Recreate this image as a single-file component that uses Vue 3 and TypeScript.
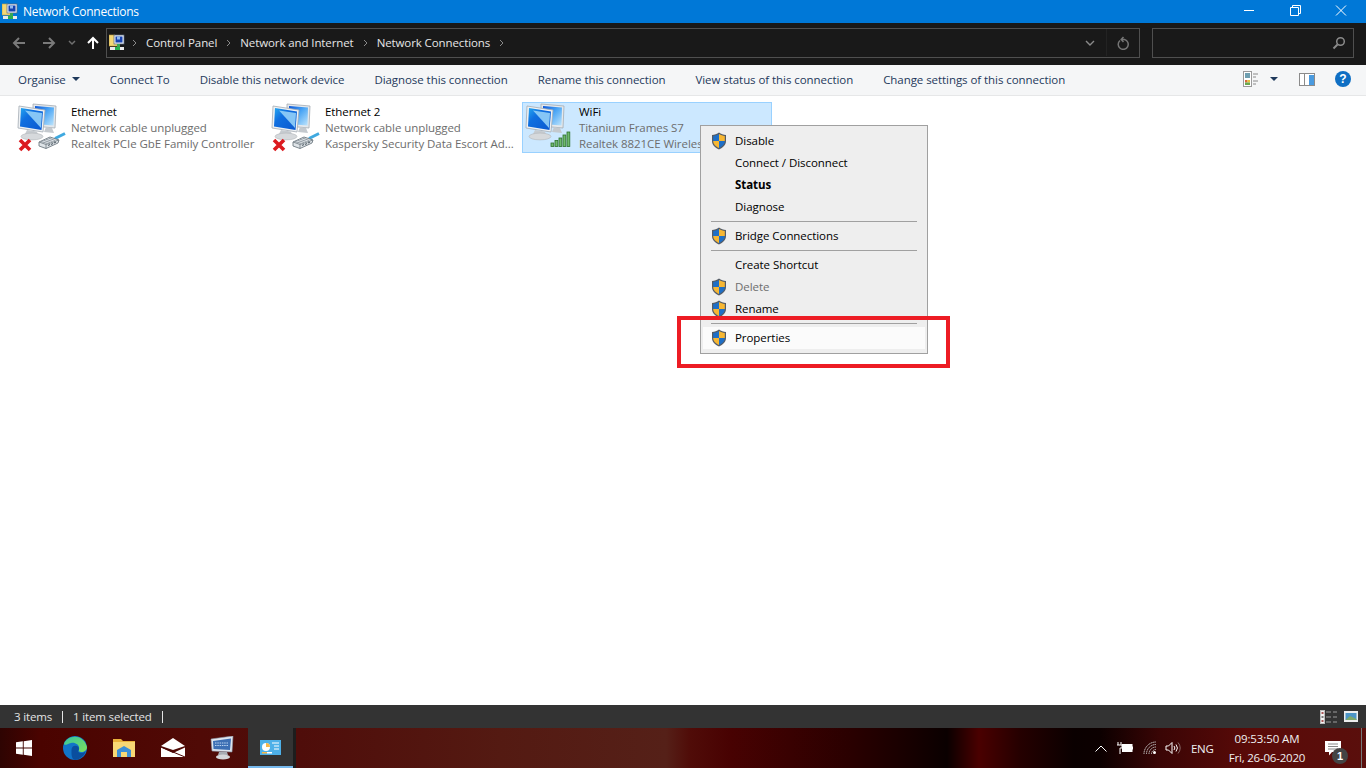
<script setup lang="ts">
const items = [
  { name: 'Ethernet', status: 'Network cable unplugged', device: 'Realtek PCIe GbE Family Controller', kind: 'wired', selected: false },
  { name: 'Ethernet 2', status: 'Network cable unplugged', device: 'Kaspersky Security Data Escort Ad...', kind: 'wired', selected: false },
  { name: 'WiFi', status: 'Titanium Frames S7', device: 'Realtek 8821CE Wireless', kind: 'wifi', selected: true },
]
const actions = [
  'Connect To',
  'Disable this network device',
  'Diagnose this connection',
  'Rename this connection',
  'View status of this connection',
  'Change settings of this connection',
]
const crumbs = ['Control Panel', 'Network and Internet', 'Network Connections']
type Entry = { label?: string; shield?: boolean; bold?: boolean; off?: boolean; hot?: boolean; sep?: boolean }
const menu: Entry[] = [
  { label: 'Disable', shield: true },
  { label: 'Connect / Disconnect' },
  { label: 'Status', bold: true },
  { label: 'Diagnose' },
  { sep: true },
  { label: 'Bridge Connections', shield: true },
  { sep: true },
  { label: 'Create Shortcut' },
  { label: 'Delete', shield: true, off: true },
  { label: 'Rename', shield: true },
  { sep: true },
  { label: 'Properties', shield: true, hot: true },
]
</script>

<template>
  <div class="window">
    <svg class="sprite" width="0" height="0" aria-hidden="true">
      <defs>
        <linearGradient id="screen" x1="0" y1="0" x2="1" y2="1">
          <stop offset="0" stop-color="#0a55d8" />
          <stop offset="0.45" stop-color="#4aa5f5" />
          <stop offset="1" stop-color="#bfe5fc" />
        </linearGradient>
        <linearGradient id="edge" x1="0" y1="0" x2="1" y2="1">
          <stop offset="0" stop-color="#25a8f0" />
          <stop offset="0.35" stop-color="#0f6fe0" />
          <stop offset="1" stop-color="#0b58cf" />
        </linearGradient>
        <symbol id="pc" viewBox="0 0 44 40">
          <path d="M16 1 39 3 38 25 16 23Z" fill="#e4e8ec" stroke="#a3abb2" stroke-width=".8" />
          <path d="M18 3 37 4.500 36.500 22.500 18 21Z" fill="url(#screen)" />
          <path d="M29 24 35 25 37 30 27 29Z" fill="#c4c9ce" />
          <path d="M2 3 28 7 26 29 1 25Z" fill="#eef1f4" stroke="#a3abb2" stroke-width=".8" />
          <path d="M4 5 26 8.500 24.500 27 3 23.500Z" fill="url(#edge)" />
          <path d="M8 7.500 25 10 24 25Z" fill="#93d0f8" opacity=".9" />
          <path d="M10 27 20 28.500 21 32 8 31Z" fill="#c6cbd0" />
          <ellipse cx="15" cy="33.500" rx="11" ry="3.400" fill="#d6d9dc" stroke="#abafb3" stroke-width=".5" />
        </symbol>
        <symbol id="cross" viewBox="0 0 14 14">
          <path d="M2 2 12 12M12 2 2 12" stroke="#dc1a1f" stroke-width="3.600" fill="none" />
        </symbol>
        <symbol id="plug" viewBox="0 0 28 18">
          <path d="M17 6.500 27 1.500" stroke="#3fa9e0" stroke-width="3" fill="none" />
          <path d="M1 10 12 5 21 8 20 11 8 16.500 1 14Z" fill="#dfe4e8" stroke="#6f7a82" stroke-width=".9" />
          <path d="M1 10 8 12.500 21 8M8 12.500V16.500" stroke="#6f7a82" stroke-width=".8" fill="none" />
          <path d="M3 9.500 9.500 11.500M5.500 8.300 12 10.500M8 7.200 14.500 9.500M10.500 6 17 8.500" stroke="#7d8891" stroke-width=".8" fill="none" />
          <path d="M10 13.500 12 12.500M13 12.500 15 11.500M16 11 18 10" stroke="#59656e" stroke-width="1.200" fill="none" />
        </symbol>
        <symbol id="bars" viewBox="0 0 22 16">
          <g fill="#6fb96c" stroke="#2c6f2c" stroke-width=".8">
            <rect x="1" y="12" width="2.800" height="3.500" />
            <rect x="5" y="9.500" width="2.800" height="6" />
            <rect x="9" y="7" width="2.800" height="8.500" />
            <rect x="13" y="4" width="2.800" height="11.500" />
            <rect x="17" y="1" width="2.800" height="14.500" />
          </g>
        </symbol>
        <symbol id="shield" viewBox="0 0 16 18">
          <path d="M8 .6C10 2 12.500 2.800 15 3V9C15 13 12 15.800 8 17.400 4 15.800 1 13 1 9V3C3.500 2.800 6 2 8 .6Z" fill="#555c66" />
          <path d="M8 2V9H2.200V3.900C4.200 3.700 6.200 3.100 8 2Z" fill="#1f6fc6" />
          <path d="M8 2C9.800 3.100 11.800 3.700 13.800 3.900V9H8Z" fill="#f7b733" />
          <path d="M2.200 9H8V16C4.800 14.600 2.200 12.400 2.200 9Z" fill="#f7b733" />
          <path d="M8 9H13.800C13.800 12.400 11.200 14.600 8 16Z" fill="#1f6fc6" />
        </symbol>
        <symbol id="netfolder" viewBox="0 0 16 17">
          <path d="M0 1H6L7 3H10V12H0Z" fill="#f4d876" stroke="#c5a33f" stroke-width=".6" />
          <rect x="5" y="1" width="10" height="9" fill="#e8edf4" stroke="#59687e" stroke-width=".7" />
          <rect x="6.500" y="2.500" width="7" height="6" fill="#1742b0" />
          <path d="M8 2.500H11V5.500H8Z" fill="#8fb9f0" />
          <rect x="8" y="10" width="3" height="3" fill="#3aa655" />
          <rect x="1" y="13" width="14" height="3" fill="#e9e9e9" />
          <rect x="6" y="13" width="5" height="3" fill="#27b04f" />
        </symbol>
      </defs>
    </svg>

    <header class="titlebar">
      <svg class="title-icon"><use href="#netfolder" /></svg>
      <span class="title-text">Network Connections</span>
      <div class="caption">
        <svg class="cap" viewBox="0 0 46 23"><path d="M18 10.500H28" stroke="#fff" fill="none" /></svg>
        <svg class="cap" viewBox="0 0 46 23"><path d="M18.500 7.500H26.500V15.500H18.500ZM20.500 7.500V5.500H28.500V13.500H26.500" stroke="#fff" fill="none" /></svg>
        <svg class="cap" viewBox="0 0 46 23"><path d="M18 5.500 28 15.500M28 5.500 18 15.500" stroke="#fff" fill="none" /></svg>
      </div>
    </header>

    <nav class="navbar">
      <div class="nav-buttons">
        <svg class="nav-arrow" viewBox="0 0 14 14"><path d="M13 7H2M7 2 2 7 7 12" stroke="#7a7a7a" stroke-width="2" fill="none" /></svg>
        <svg class="nav-arrow fwd" viewBox="0 0 14 14"><path d="M1 7H12M7 2 12 7 7 12" stroke="#7a7a7a" stroke-width="2" fill="none" /></svg>
        <svg class="nav-drop" viewBox="0 0 8 6"><path d="M1 1 4 4 7 1" stroke="#6f6f6f" stroke-width="1.500" fill="none" /></svg>
        <svg class="nav-arrow up" viewBox="0 0 14 14"><path d="M7 13V2M2 7 7 2 12 7" stroke="#fff" stroke-width="2" fill="none" /></svg>
      </div>
      <div class="address">
        <svg class="addr-icon"><use href="#netfolder" /></svg>
        <svg class="crumb-arrow first" viewBox="0 0 5 8"><path d="M1 1 4 4 1 7" stroke="#8a8a8a" fill="none" /></svg>
        <template v-for="c in crumbs" :key="c">
          <span class="crumb">{{ c }}</span>
          <svg class="crumb-arrow" viewBox="0 0 5 8"><path d="M1 1 4 4 1 7" stroke="#8a8a8a" fill="none" /></svg>
        </template>
        <span class="addr-fill"></span>
        <svg class="addr-drop" viewBox="0 0 10 6"><path d="M1 1 5 5 9 1" stroke="#8a8a8a" stroke-width="1.400" fill="none" /></svg>
        <span class="addr-refresh">
          <svg viewBox="0 0 12 14" width="12" height="14"><path d="M3 4.500A5 5 0 1 0 7.500 3.500H4.500M6.500 1 4.200 3.500 6.500 6" stroke="#757575" stroke-width="1.500" fill="none" /></svg>
        </span>
      </div>
      <div class="search">
        <svg viewBox="0 0 14 14" width="14" height="14"><circle cx="8.500" cy="5.500" r="3.800" stroke="#8a8a8a" stroke-width="1.500" fill="none" /><path d="M5.500 8.500 1.500 12.500" stroke="#8a8a8a" stroke-width="2" /></svg>
      </div>
    </nav>

    <div class="toolbar">
      <span class="tool organise">Organise<i class="caret"></i></span>
      <span v-for="a in actions" :key="a" class="tool">{{ a }}</span>
      <div class="tool-right">
        <svg viewBox="0 0 16 16" width="16" height="16">
          <rect x=".5" y=".5" width="8" height="15" fill="#fff" stroke="#9a9a9a" />
          <rect x="2" y="2" width="5" height="5" fill="#6f9fb0" />
          <rect x="2" y="9" width="2.500" height="2.500" fill="#d86a3a" />
          <rect x="4.500" y="9" width="2.500" height="2.500" fill="#e8c23a" />
          <rect x="2" y="11.500" width="5" height="2.500" fill="#6aa84f" />
          <path d="M10 3H15M10 6H13M10 10H15M10 13H13" stroke="#8a8a8a" />
        </svg>
        <i class="caret view-caret"></i>
        <svg class="pane-icon" viewBox="0 0 16 13" width="16" height="13">
          <rect x=".5" y=".5" width="15" height="12" fill="#fff" stroke="#8b8b8b" />
          <rect x="5" y="1" width="1" height="11" fill="#8b8b8b" />
          <rect x="10" y="2" width="5" height="10" fill="#4a9be0" />
        </svg>
        <span class="help">?</span>
      </div>
    </div>

    <main class="content">
      <div v-for="it in items" :key="it.name" class="item" :class="{ selected: it.selected }">
        <div class="item-icon">
          <svg class="pc"><use href="#pc" /></svg>
          <template v-if="it.kind === 'wired'">
            <svg class="cross"><use href="#cross" /></svg>
            <svg class="plug"><use href="#plug" /></svg>
          </template>
          <svg v-else class="bars"><use href="#bars" /></svg>
        </div>
        <div class="item-text">
          <div class="item-name">{{ it.name }}</div>
          <div class="item-sub">{{ it.status }}</div>
          <div class="item-sub">{{ it.device }}</div>
        </div>
      </div>

      <ul class="menu">
        <template v-for="(m, i) in menu" :key="i">
          <li v-if="m.sep" class="sep"></li>
          <li v-else class="entry" :class="{ bold: m.bold, off: m.off, hot: m.hot }">
            <svg v-if="m.shield" class="shield"><use href="#shield" /></svg>
            <span class="entry-label">{{ m.label }}</span>
          </li>
        </template>
      </ul>
      <div class="callout"></div>
    </main>

    <footer class="statusbar">
      <span class="st">3 items</span>
      <i class="st-div"></i>
      <span class="st">1 item selected</span>
      <i class="st-div"></i>
      <span class="tool-fill"></span>
      <svg class="st-details" viewBox="0 0 17 14" width="17" height="14">
        <rect x=".5" y=".5" width="4" height="13" fill="#f2f2f2" stroke="#bbb" />
        <rect x="1.500" y="2" width="2" height="2" fill="#a55" /><rect x="1.500" y="6" width="2" height="2" fill="#777" /><rect x="1.500" y="10" width="2" height="2" fill="#a55" />
        <path d="M6 2H11M13 2H17M6 7H11M13 7H17M6 12H11M13 12H17" stroke="#9c9c9c" />
      </svg>
      <svg viewBox="0 0 14 11" width="14" height="11">
        <rect width="14" height="11" fill="#eee" />
        <rect x="1.500" y="2" width="11" height="7" fill="#4d95c6" />
        <path d="M1.500 9 6 5 12.500 8V9Z" fill="#7ea86b" />
      </svg>
    </footer>

    <div class="taskbar">
      <svg class="tb-start" viewBox="0 0 16 16" width="16" height="16">
        <path d="M0 2.300 6.800 1.300V7.500H0ZM7.700 1.200 16 0V7.500H7.700ZM0 8.400H6.800V14.700L0 13.700ZM7.700 8.400H16V16L7.700 14.800Z" fill="#fff" />
      </svg>
      <svg class="tb-edge" viewBox="0 0 24 24" width="24" height="24">
        <defs>
          <linearGradient id="edgeA" x1="0" y1="0" x2="1" y2="1"><stop offset="0" stop-color="#36c6a0" /><stop offset="1" stop-color="#7ee05c" /></linearGradient>
        </defs>
        <circle cx="12" cy="12" r="12" fill="#1174c8" />
        <path d="M1 8C4-1 20-3 24 11 24 16 18 17 15.500 15 18 10 13 6 8 7 4 8 2 10 1 8Z" fill="url(#edgeA)" />
        <path d="M8.500 14C8.500 10 12 8.800 15 10.500 16.500 12 16 14.500 15 15.500 17 18 21 17 22.500 15.500 21 21 15 24 12 24 8 23 8.500 17 8.500 14Z" fill="#0a4e9e" />
      </svg>
      <svg class="tb-folder" viewBox="0 0 22 20" width="22" height="20">
        <path d="M0 1H8L10 3H22V19H0Z" fill="#e9b13b" />
        <rect y="4" width="22" height="15" fill="#f8d775" />
        <path d="M4 19V12L11 8 18 12V19H14V14H8V19Z" fill="#3d8fd6" />
      </svg>
      <svg class="tb-mail" viewBox="0 0 24 20" width="24" height="20">
        <path d="M0 8 12 0 24 8 12 12Z" fill="#fff" />
        <path d="M0 9.500 12 15 24 9.500V19H0Z" fill="#fff" />
        <path d="M0 9 12 14 24 19" stroke="#4f0705" stroke-width="1" fill="none" />
      </svg>
      <svg class="tb-pc" viewBox="0 0 24 24" width="24" height="24">
        <path d="M1 3 23 0 22 16 2 15Z" fill="#dfe6ef" stroke="#8c97a6" stroke-width=".6" />
        <path d="M3 5 21 2.500 20 14 3.500 13Z" fill="#3d6fb4" />
        <path d="M5 7H18M5 9.500H18" stroke="#b8d2f0" stroke-dasharray="1.500 .8" />
        <path d="M9 16H17L18 19H8Z" fill="#a8acb2" />
        <ellipse cx="13" cy="21" rx="7" ry="2.500" fill="#d5d7da" />
      </svg>
      <div class="tb-active">
        <svg viewBox="0 0 21 15" width="21" height="15">
          <rect width="21" height="15" fill="#4db0e8" />
          <circle cx="6" cy="7" r="4" fill="#fff" />
          <path d="M6 7V3A4 4 0 0 1 10 7Z" fill="#f7b84a" />
          <path d="M12 3H19M14 6H19M14 9H19" stroke="#fff" />
          <rect x="2" y="12" width="5" height="1.500" fill="#f7b84a" />
          <rect x="7" y="12" width="5" height="1.500" fill="#fff" />
        </svg>
      </div>
      <i class="tb-gap"></i>
      <span class="tool-fill"></span>
      <svg class="tray" viewBox="0 0 12 7" width="12" height="7"><path d="M.5 6.500 6 1 11.500 6.500" stroke="#fff" fill="none" /></svg>
      <svg class="tray batt" viewBox="0 0 16 12" width="16" height="12">
        <path d="M1 0V3M4 0V3M0 3H5V6H3V12" stroke="#fff" fill="none" />
        <rect x="5.500" y="2.500" width="9.500" height="7" fill="#fff" stroke="#fff" />
        <rect x="15" y="4.500" width="1" height="3" fill="#fff" />
      </svg>
      <svg class="tray wifi" viewBox="0 0 14 14" width="14" height="14">
        <path d="M1 13A12 12 0 0 1 13 1M3.500 13A9.500 9.500 0 0 1 13 3.500M6 13A7 7 0 0 1 13 6M8.500 13A4.500 4.500 0 0 1 13 8.500" stroke="#c8c8c8" stroke-dasharray="1.400 .5" fill="none" />
        <circle cx="11.500" cy="11.500" r="1.500" fill="#fff" />
      </svg>
      <svg class="tray vol" viewBox="0 0 16 14" width="16" height="14">
        <path d="M1 5H3.500L7 1.500V12.500L3.500 9H1Z" stroke="#fff" fill="none" />
        <path d="M9 5A3 3 0 0 1 9 9M11 3.500A5.500 5.500 0 0 1 11 10.500" stroke="#fff" fill="none" />
        <path d="M13 1.500A8 8 0 0 1 13 12.500" stroke="#8a6a6a" fill="none" />
      </svg>
      <span class="eng">ENG</span>
      <div class="clock">
        <div class="time">09:53:50 AM</div>
        <div>Fri, 26-06-2020</div>
      </div>
      <div class="notify">
        <svg viewBox="0 0 16 15" width="16" height="15">
          <path d="M0 0H16V11H7L4 14.500V11H0Z" fill="#fff" />
          <path d="M3 3H13M3 5.500H13M3 8H13" stroke="#888" />
        </svg>
        <span class="badge">1</span>
      </div>
      <i class="show-desk"></i>
    </div>
  </div>
</template>

<style>
html, body { margin: 0; background: #fff; }
</style>

<style scoped>
.window {
  width: 1366px;
  height: 768px;
  display: flex;
  flex-direction: column;
  overflow: hidden;
  font-family: "Open Sans", "Noto Sans", sans-serif;
  font-size: 11.5px;
  letter-spacing: -0.06px;
  color: #000;
}
.sprite { position: absolute; }

.titlebar {
  height: 23px;
  background: #0078d7;
  display: flex;
  align-items: center;
  color: #fff;
  flex: none;
}
.title-icon { width: 16px; height: 17px; margin: 0 5px 0 2px; }
.title-text { font-size: 12px; letter-spacing: -0.25px; }
.caption { margin-left: auto; display: flex; margin-right: 2px; }
.cap { width: 46px; height: 23px; }

.navbar {
  height: 42px;
  flex: none;
  background: #191919;
  display: flex;
  align-items: flex-start;
  padding-top: 5px;
  box-sizing: border-box;
}
.nav-buttons { width: 106px; height: 30px; display: flex; align-items: center; flex: none; padding-left: 12px; box-sizing: border-box; }
.nav-arrow { width: 14px; height: 14px; }
.fwd { margin-left: 16px; }
.nav-drop { width: 8px; height: 6px; margin-left: 12px; }
.up { margin-left: 10px; }
.address {
  width: 1034px;
  height: 30px;
  box-sizing: border-box;
  border: 1px solid #4f4f4f;
  padding-bottom: 1px;
  display: flex;
  align-items: center;
  color: #e6e6e6;
  letter-spacing: -0.1px;
  flex: none;
}
.addr-icon { width: 16px; height: 17px; margin-left: 2px; }
.crumb-arrow { width: 5px; height: 8px; margin: 0 9px; flex: none; }
.first { margin-left: 7px; }
.crumb { white-space: nowrap; }
.addr-fill { flex: 1; }
.addr-drop { width: 10px; height: 6px; margin-right: 11px; }
.addr-refresh {
  width: 32px;
  height: 100%;
  display: flex;
  align-items: center;
  justify-content: center;
  border-left: 1px solid #232323;
}
.search {
  width: 202px;
  height: 30px;
  box-sizing: border-box;
  margin-left: 12px;
  border: 1px solid #4f4f4f;
  display: flex;
  align-items: center;
  justify-content: flex-end;
  padding-right: 7px;
  flex: none;
}

.toolbar {
  height: 31px;
  flex: none;
  box-sizing: border-box;
  background: #f5f6f7;
  border-bottom: 1px solid #e6e7e8;
  display: flex;
  align-items: center;
  padding: 0 15px 2px 18px;
  color: #1e395b;
  gap: 30px;
}
.tool { white-space: nowrap; }
.organise { display: flex; align-items: center; }
.caret {
  width: 0;
  height: 0;
  border-left: 4px solid transparent;
  border-right: 4px solid transparent;
  border-top: 4px solid #1e395b;
  margin-left: 6px;
}
.tool-fill { flex: 1; }
.tool-right { margin-left: auto; display: flex; align-items: center; }
.view-caret { margin-left: 11px; }
.pane-icon { margin-left: 21px; }
.help {
  width: 16px;
  height: 16px;
  border-radius: 50%;
  background: #0f6fc4;
  color: #fff;
  font: bold 12px/16px "Liberation Sans", sans-serif;
  text-align: center;
  letter-spacing: 0;
  margin-left: 20px;
}

.content {
  flex: 1;
  position: relative;
  background: #fff;
  display: flex;
  gap: 4px;
  align-items: flex-start;
  padding: 6px 0 0 14px;
}
.item {
  width: 250px;
  height: 51px;
  box-sizing: border-box;
  border: 1px solid transparent;
  padding-top: 1px;
  display: flex;
}
.selected { background: #cce8ff; border-color: #99d1ff; }
.item-icon { width: 56px; height: 48px; position: relative; flex: none; }
.pc { position: absolute; left: 2px; top: -1px; width: 44px; height: 40px; }
.cross { position: absolute; left: 3px; top: 34px; width: 14px; height: 14px; }
.plug { position: absolute; left: 23px; top: 28px; width: 28px; height: 18px; }
.bars { position: absolute; left: 27px; top: 25px; width: 22px; height: 20px; }
.item-text { min-width: 0; flex: 1; line-height: 16px; }
.item-name { color: #000; }
.item-sub { color: #6d6d6d; white-space: nowrap; }

.menu {
  position: absolute;
  left: 700px;
  top: 29px;
  width: 228px;
  box-sizing: border-box;
  margin: 0;
  padding: 4px 2px;
  list-style: none;
  background: #eeeeee;
  border: 1px solid #a0a0a0;
  color: #000;
}
.entry {
  height: 22px;
  display: flex;
  align-items: center;
  position: relative;
  padding-left: 32px;
  line-height: 22px;
}
.bold { font-weight: 700; }
.off { color: #6d6d6d; }
.hot { background: #fbfbfb; }
.shield { position: absolute; left: 8px; top: 2px; width: 16px; height: 18px; }
.sep { height: 7px; position: relative; }
.sep::after {
  content: "";
  position: absolute;
  left: 8px;
  right: 8px;
  top: 3px;
  height: 1px;
  background: #a0a0a0;
}
.callout {
  position: absolute;
  left: 677px;
  top: 220px;
  width: 273px;
  height: 52px;
  box-sizing: border-box;
  border: 4px solid #ed1c24;
  pointer-events: none;
}

.statusbar {
  height: 23px;
  flex: none;
  background: #333;
  color: #e4e4e4;
  display: flex;
  align-items: center;
  padding: 0 8px 0 14px;
  letter-spacing: -0.16px;
}
.st { white-space: nowrap; }
.st-div { width: 1px; height: 12px; background: #e4e4e4; margin: 0 10px; }
.st-details { margin-right: 7px; }

.taskbar {
  height: 40px;
  flex: none;
  display: flex;
  align-items: center;
  color: #f0f0f0;
  background: linear-gradient(90deg, #2e0402 0, #4a0300 40px, #500a06 200px, #4f0d0a 300px, #541a12 500px, #552018 666px, #500c08 690px, #480202 730px, #2a0000 850px, #150000 915px, #0a0000 947px, #4a0000 979px, #250000 1020px, #0a0000 1074px, #0c0000 1100px, #3a0505 1160px, #5a0a08 1250px, #5a0f0c 1366px);
}
.tb-start { margin-left: 16px; }
.tb-edge { margin-left: 31px; }
.tb-folder { margin-left: 26px; }
.tb-mail { margin-left: 26px; }
.tb-pc { margin-left: 25px; }
.tb-active {
  margin-left: 14px;
  width: 45px;
  height: 40px;
  box-sizing: border-box;
  background: #333;
  border-bottom: 2px solid #76b9ed;
  display: flex;
  align-items: center;
  justify-content: center;
}
.tb-gap { width: 3px; height: 40px; background: #1d1d1d; }
.tray { flex: none; }
.batt { margin-left: 10px; }
.wifi { margin-left: 10px; }
.vol { margin-left: 8px; }
.eng { margin-left: 10px; width: 23px; white-space: nowrap; letter-spacing: -0.3px; }
.clock { width: 90px; margin-left: 8px; text-align: center; line-height: 19px; letter-spacing: -0.2px; }
.time { letter-spacing: -0.1px; }
.notify { position: relative; width: 30px; height: 40px; margin-left: 6px; display: flex; align-items: center; justify-content: center; }
.badge {
  position: absolute;
  left: 14px;
  top: 20px;
  width: 16px;
  height: 16px;
  border-radius: 50%;
  background: #444;
  color: #fff;
  font: bold 11px/16px "Liberation Sans", sans-serif;
  text-align: center;
  letter-spacing: 0;
}
.show-desk { width: 1px; height: 40px; background: #777; margin: 0 4px 0 13px; }
</style>
